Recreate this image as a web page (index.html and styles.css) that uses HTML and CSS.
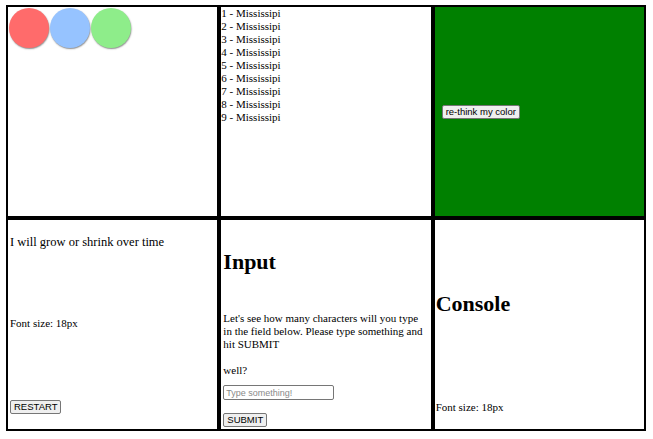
FILE: index.html
```html
<!DOCTYPE html>
<html>
<head>
<meta charset="utf-8">
<link rel="stylesheet" href="styles.css">
</head>
<body>
<div class="board">
  <div class="cell dots">
    <span class="dot red"></span>
    <span class="dot blue"></span>
    <span class="dot green"></span>
  </div>
  <div class="cell list">
    <div>1 - Mississipi</div>
    <div>2 - Mississipi</div>
    <div>3 - Mississipi</div>
    <div>4 - Mississipi</div>
    <div>5 - Mississipi</div>
    <div>6 - Mississipi</div>
    <div>7 - Mississipi</div>
    <div>8 - Mississipi</div>
    <div>9 - Mississipi</div>
  </div>
  <div class="cell colorbox">
    <button class="btn">re-think my color</button>
  </div>
  <div class="cell grow">
    <p class="grow-text">I will grow or shrink over time</p>
    <p class="small">Font size: 18px</p>
    <div><button class="btn">RESTART</button></div>
  </div>
  <div class="cell input-cell">
    <h2 class="title input-title">Input</h2>
    <p class="small desc">Let's see how many characters will you type in the field below. Please type something and hit SUBMIT</p>
    <p class="small well">well?</p>
    <input class="field" type="text" placeholder="Type something!">
    <div><button class="btn submit">SUBMIT</button></div>
  </div>
  <div class="cell console">
    <h2 class="title console-title">Console</h2>
    <p class="small console-size">Font size: 18px</p>
  </div>
</div>
</body>
</html>
```

FILE: styles.css
```css
html, body {
  margin: 0;
  padding: 0;
  background: #fff;
}
body {
  font-family: "Liberation Serif", "Times New Roman", serif;
  color: #000;
}
.board {
  margin: 5px 0 0 6px;
  width: 640px;
  height: 426px;
  display: grid;
  grid-template-columns: repeat(3, 1fr);
  grid-template-rows: repeat(2, 1fr);
}
.cell {
  box-sizing: border-box;
  border: 2px solid #000;
  overflow: hidden;
  min-width: 0;
}
.dots {
  display: flex;
  align-items: flex-start;
  padding: 1px;
}
.dot {
  width: 40px;
  height: 40px;
  border-radius: 50%;
  margin-right: 1px;
  box-shadow: 0.5px 1px 1.5px rgba(0, 0, 0, 0.45);
}
.red { background: #ff6b6b; }
.blue { background: #96c3ff; }
.green { background: #8eed8a; }

.list {
  font-size: 11px;
  line-height: 13px;
  padding: 0;
}
.colorbox {
  background: #008000;
  display: flex;
  align-items: center;
  padding-left: 7px;
}
.btn {
  font-family: "Liberation Sans", Arial, sans-serif;
  font-size: 9.5px;
  line-height: 12px;
  color: #000;
  background: #efefef;
  border: 1px solid #767676;
  border-radius: 2px;
  padding: 0 3px;
  margin: 0;
}
.small {
  font-size: 11px;
  line-height: 13px;
  margin: 0;
}
.grow {
  display: flex;
  flex-direction: column;
  justify-content: space-between;
  padding: 15px 2px 15px 2px;
}
.grow-text {
  font-size: 12.5px;
  line-height: 15px;
  margin: 0;
}
.input-cell {
  padding: 0 2px;
}
.title {
  font-size: 22px;
  line-height: 25px;
  font-weight: bold;
  margin: 0;
}
.input-title {
  margin-top: 29px;
}
.desc {
  margin-top: 38px;
}
.well {
  margin-top: 13px;
  margin-bottom: 8px;
}
.field {
  display: block;
  box-sizing: border-box;
  width: 111px;
  height: 15px;
  margin: 0 0 9px 0;
  padding: 0 2px;
  border: 1px solid #767676;
  border-radius: 2px;
  font-family: "Liberation Sans", Arial, sans-serif;
  font-size: 9px;
}
.field::placeholder {
  color: #8a8a8a;
}
.console {
  display: flex;
  flex-direction: column;
  padding: 0 1px 15px 1px;
}
.console-title {
  margin-top: 71px;
}
.console-size {
  margin-top: auto;
}
```
